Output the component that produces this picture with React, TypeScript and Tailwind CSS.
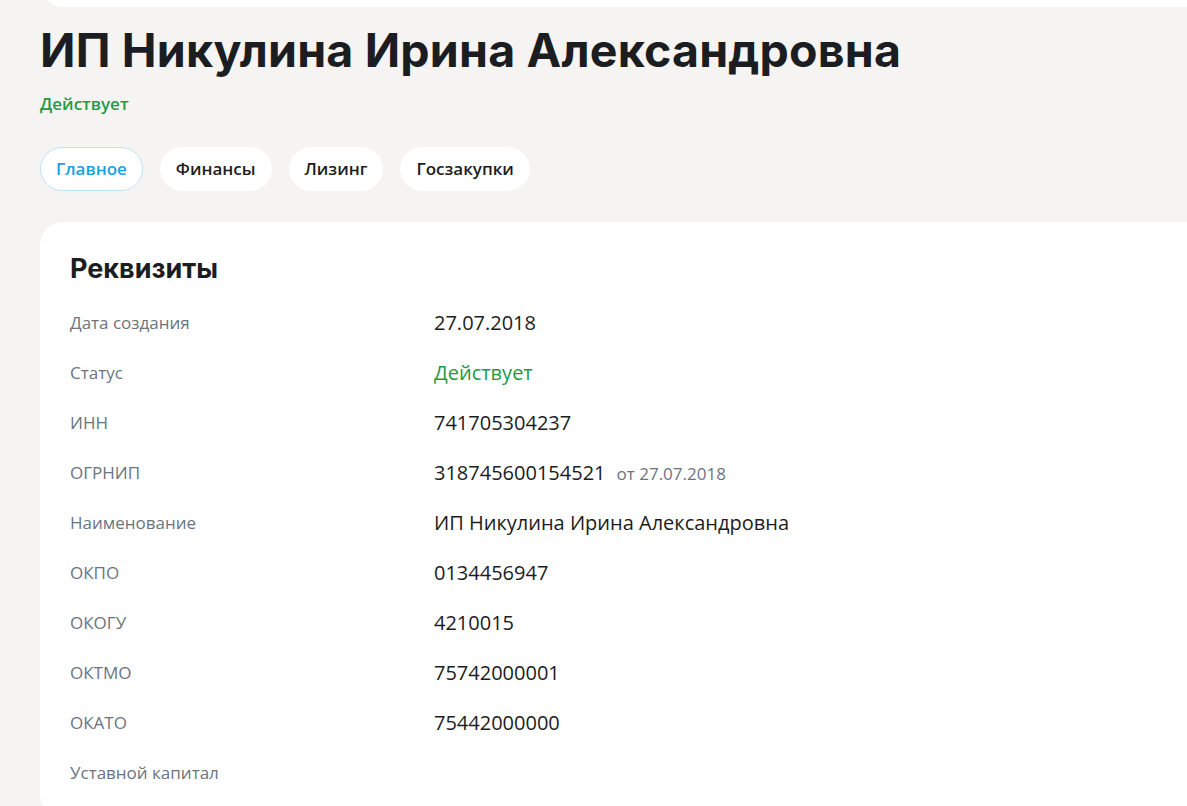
const rows: { label: string; value?: string; extra?: string; green?: boolean }[] = [
  { label: 'Дата создания', value: '27.07.2018' },
  { label: 'Статус', value: 'Действует', green: true },
  { label: 'ИНН', value: '741705304237' },
  { label: 'ОГРНИП', value: '318745600154521', extra: 'от 27.07.2018' },
  { label: 'Наименование', value: 'ИП Никулина Ирина Александровна' },
  { label: 'ОКПО', value: '0134456947' },
  { label: 'ОКОГУ', value: '4210015' },
  { label: 'ОКТМО', value: '75742000001' },
  { label: 'ОКАТО', value: '75442000000' },
  { label: 'Уставной капитал' },
]

const tabs = ['Главное', 'Финансы', 'Лизинг', 'Госзакупки']

const App = () => {
  return (
    <div className="min-h-screen overflow-hidden bg-[#f5f4f2] pl-10 font-['Open_Sans',sans-serif]">
      {/* bottom edge of the card above, cut off by the viewport */}
      <div className="-mt-[53px] -mr-10 h-[60px] rounded-3xl bg-white" />

      <h1 className="mt-[15px] font-['Inter',sans-serif] text-[46.5px] leading-[56px] font-bold tracking-[0.2px] text-[#1b1d21]">
        ИП Никулина Ирина Александровна
      </h1>
      <p className="mt-[14px] text-[17px] leading-[24px] font-semibold text-[#1f9a45]">Действует</p>

      <div className="mt-[31px] flex gap-[17px]">
        {tabs.map((t, i) => (
          <button
            key={t}
            className={
              i === 0
                ? 'h-[44px] rounded-full border border-[#bfe3f5] bg-white px-[15px] text-[17px] font-semibold text-[#1ba0e2]'
                : 'h-[44px] rounded-full border border-white bg-white px-[15px] text-[17px] font-semibold text-[#1b1d21]'
            }
          >
            {t}
          </button>
        ))}
      </div>

      <div className="mt-[31px] -mr-10 rounded-3xl bg-white pt-[31px] pb-[20px] pl-[30px]">
        <h2 className="font-['Inter',sans-serif] text-[27px] leading-[32px] font-bold text-[#1b1d21]">Реквизиты</h2>
        <div className="mt-[13px]">
          {rows.map((r) => (
            <div key={r.label} className="flex h-[50px] items-center">
              <div className="w-[364px] text-[17px] text-[#6b7480]">{r.label}</div>
              {r.value && (
                <div className={r.green ? 'text-[20px] text-[#1f9a45]' : 'text-[20px] text-[#1b1d21]'}>
                  {r.value}
                  {r.extra && <span className="ml-[11px] text-[17px] text-[#6b7480]">{r.extra}</span>}
                </div>
              )}
            </div>
          ))}
        </div>
      </div>
    </div>
  )
}

export default App
